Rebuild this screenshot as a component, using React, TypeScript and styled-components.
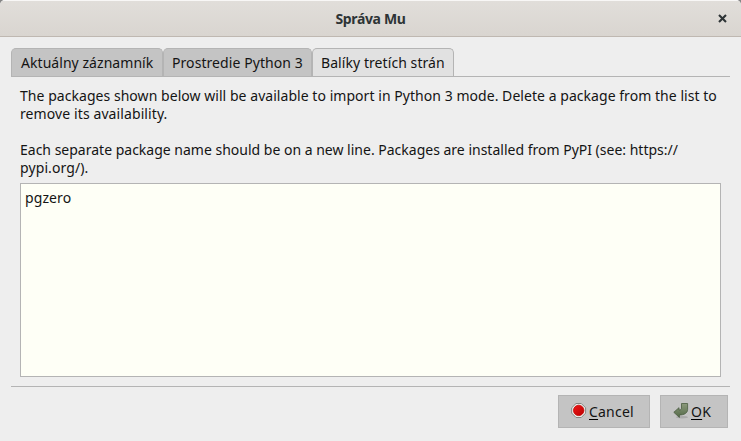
import React from "react";
import styled, { createGlobalStyle } from "styled-components";

const Global = createGlobalStyle`
  * { box-sizing: border-box; }
  html, body { margin: 0; padding: 0; }
  body { background: #858585; overflow: hidden; }
`;

const Dialog = styled.div`
  display: flex;
  flex-direction: column;
  width: 741px;
  height: 441px;
  background: #eeeeee;
  border-radius: 5px 5px 0 0;
  overflow: hidden;
  color: #141414;
  font-family: "Noto Sans", "Open Sans", sans-serif;
  font-size: 14px;
  line-height: 18px;
`;

const TitleBar = styled.header`
  display: grid;
  grid-template-columns: 37px 1fr 37px;
  align-items: center;
  height: 37px;
  flex: none;
  background: linear-gradient(#e1deda, #d9d5d0);
  border-top: 1px solid #f8f7f6;
  border-bottom: 1px solid #bfb8b1;
  color: #2e3436;
`;

const Title = styled.h1<{ $spacing: number }>`
  grid-column: 2;
  margin: 0;
  font-size: 14px;
  font-weight: 700;
  line-height: 20px;
  text-align: center;
  letter-spacing: ${(p) => p.$spacing}px;
`;

const CloseButton = styled.button`
  display: flex;
  padding: 0;
  width: 9px;
  height: 9px;
  margin-left: 14px;
  margin-top: -1px;
  border: 0;
  background: none;
  color: #2e3436;
`;

const Tabs = styled.nav`
  display: flex;
  flex: none;
  height: 29px;
  margin: 11px 11px 0;
  border-bottom: 1px solid #b4b4b4;
`;

const Tab = styled.button<{ $width: number; $active?: boolean; $spacing: number }>`
  width: ${(p) => p.$width}px;
  height: 28px;
  padding: 0 0 0 8px;
  border: 1px solid #b4b4b4;
  border-bottom: 0;
  border-radius: 5px 5px 0 0;
  background: ${(p) => (p.$active ? "#e1e1e1" : "#c4c4c4")};
  color: inherit;
  font: inherit;
  letter-spacing: ${(p) => p.$spacing}px;
  text-align: left;
  white-space: nowrap;

  &:first-child { padding-left: 9px; }
`;

const Panel = styled.main`
  display: flex;
  flex-direction: column;
  flex: none;
  height: 310px;
  margin: 0 11px;
  padding: 10px 9px 9px;
  border-bottom: 1px solid #b4b4b4;
`;

const Description = styled.div`
  display: grid;
  align-content: start;
  gap: 18px;
  height: 96px;
  flex: none;
`;

const Line = styled.span<{ $spacing: number }>`
  display: block;
  width: max-content;
  letter-spacing: ${(p) => p.$spacing}px;
  white-space: nowrap;
`;

const PackageList = styled.textarea`
  display: block;
  flex: none;
  width: 701px;
  height: 194px;
  padding: 5px 4px;
  border: 1px solid #b4b4b4;
  border-radius: 0;
  outline: 0;
  resize: none;
  background: #fefff6;
  color: inherit;
  font: inherit;
  letter-spacing: 0.1px;
`;

const Actions = styled.footer`
  display: flex;
  justify-content: flex-end;
  gap: 10px;
  padding: 8px 13px 0;
`;

const ActionButton = styled.button<{ $width: number }>`
  display: flex;
  align-items: center;
  gap: 2px;
  width: ${(p) => p.$width}px;
  height: 33px;
  padding: 1px 0 0 12px;
  border: 1px solid #b4b4b4;
  border-radius: 0;
  background: #c4c4c4;
  color: inherit;
  font: inherit;
  letter-spacing: 0.2px;

  svg { flex: none; margin-top: -3px; }
`;

const Mnemonic = styled.span`
  text-decoration: underline 1px #000000;
  text-underline-offset: 2px;
`;

const CloseIcon = () => (
  <svg width="9" height="9" viewBox="0 0 9 9" fill="none" stroke="currentColor" strokeWidth="2.1">
    <path d="M1 1L8 8M8 1L1 8" />
  </svg>
);

const StopIcon = () => (
  <svg width="16" height="16" viewBox="0 0 16 16">
    <defs>
      <linearGradient id="stop-fill" x1="0" y1="0" x2="1" y2="1">
        <stop offset="0" stopColor="#f01818" />
        <stop offset="1" stopColor="#b80000" />
      </linearGradient>
    </defs>
    <path d="M5 .5H10.3L14.6 4.8V10.1L10.3 14.5H5L.7 10.1V4.8Z" fill="#eeeeea" stroke="#858783" />
    <circle cx="7.7" cy="7.4" r="5.2" fill="url(#stop-fill)" stroke="#c40000" strokeWidth=".8" />
  </svg>
);

const ReturnIcon = () => (
  <svg width="16" height="16" viewBox="0 0 16 16">
    <defs>
      <linearGradient id="arrow-fill" x1="0" y1="0" x2="0" y2="1">
        <stop offset="0" stopColor="#8b997b" />
        <stop offset="1" stopColor="#546a48" />
      </linearGradient>
    </defs>
    <ellipse cx="9" cy="14.2" rx="6" ry="1.2" fill="#aaaaaa" />
    <path
      d="M8.5 .5H14.6V6.5C14.6 9.8 11.5 12 6.4 12V14.4L.8 9.3L6 4.7V7C7.8 7 8.5 6.4 8.5 5Z"
      fill="url(#arrow-fill)"
      stroke="#4a5c40"
      strokeWidth=".8"
    />
  </svg>
);

export default function App() {
  return (
    <>
      <Global />
      <Dialog>
        <TitleBar>
          <Title $spacing={-0.35}>Správa Mu</Title>
          <CloseButton aria-label="Close"><CloseIcon /></CloseButton>
        </TitleBar>
        <Tabs>
          <Tab $width={152} $spacing={0.05}>Aktuálny záznamník</Tab>
          <Tab $width={149} $spacing={0.07}>Prostredie Python 3</Tab>
          <Tab $width={142} $spacing={0.07} $active>Balíky tretích strán</Tab>
        </Tabs>
        <Panel>
          <Description>
            <div>
              <Line $spacing={0.045}>The packages shown below will be available to import in Python 3 mode. Delete a package from the list to</Line>
              <Line $spacing={0.1}>remove its availability.</Line>
            </div>
            <div>
              <Line $spacing={0}>Each separate package name should be on a new line. Packages are installed from PyPI (see: https://</Line>
              <Line $spacing={0.1}>pypi.org/).</Line>
            </div>
          </Description>
          <PackageList defaultValue="pgzero" spellCheck={false} />
        </Panel>
        <Actions>
          <ActionButton $width={92}><StopIcon /><span><Mnemonic>C</Mnemonic>ancel</span></ActionButton>
          <ActionButton $width={68}><ReturnIcon /><span><Mnemonic>O</Mnemonic>K</span></ActionButton>
        </Actions>
      </Dialog>
    </>
  );
}
